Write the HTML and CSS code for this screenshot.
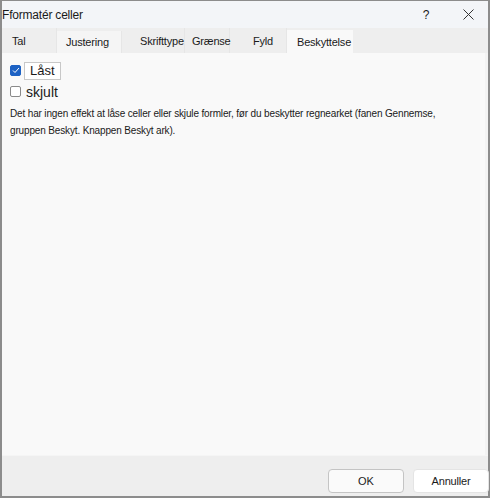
FILE: index.html
```html
<!DOCTYPE html>
<html lang="da">
<head>
<meta charset="UTF-8">
<title>Formatér celler</title>
<link rel="stylesheet" href="styles.css">
</head>
<body>
<div class="dialog">
<div class="title-bar">
<span class="title">Fformatér celler</span>
<span class="title-btn">?</span>
<span class="title-btn close">
<svg width="11" height="11" viewBox="0 0 11 11"><path d="M0.5 0.5L10.5 10.5M10.5 0.5L0.5 10.5" stroke="#333" stroke-width="1"/></svg>
</span>
</div>
<div class="tabs">
<div class="tab tab-tal">Tal</div>
<div class="tab tab-just">Justering</div>
<div class="tab tab-skrift">Skrifttype</div>
<div class="tab tab-graense">Grænse</div>
<div class="tab tab-fyld">Fyld</div>
<div class="tab tab-besk active">Beskyttelse</div>
</div>
<div class="panel">
<label class="check-row">
<span class="chk on"><svg width="8" height="7" viewBox="0 0 8 7"><path d="M1 3.5L3 5.5L7 1" stroke="#fff" stroke-width="1" fill="none"/></svg></span>
<span class="chk-label focus">Låst</span>
</label>
<label class="check-row">
<span class="chk"></span>
<span class="chk-label big">skjult</span>
</label>
<p class="note">Det har ingen effekt at låse celler eller skjule formler, før du beskytter regnearket (fanen Gennemse, gruppen Beskyt. Knappen Beskyt ark).</p>
</div>
<div class="footer">
<button type="button" class="btn btn-ok">OK</button>
<button type="button" class="btn btn-cancel">Annuller</button>
</div>
</div>
</body>
</html>
```
FILE: styles.css
```css
html, body { margin: 0; padding: 0; background: #fff; }
body { font-family: "Liberation Sans", Arial, sans-serif; color: #1a1a1a; }
.dialog { width: 490px; height: 498px; border-left: 2px solid #8c8c8c; border-right: 2px solid #8c8c8c; border-top: 1px solid #8c8c8c; border-bottom: 2px solid #8c8c8c; display: flex; flex-direction: column; box-sizing: border-box; }
.title-bar { height: 27px; background: #f3f5f8; display: flex; align-items: center; font-size: 12px; }
.title { flex: 1; letter-spacing: -0.2px; }
.title-btn { width: 44px; text-align: center; font-size: 12px; }
.close { display: flex; justify-content: center; align-items: center; width: 40px; }
.tabs { height: 25px; background: #eeeeee; display: flex; font-size: 11px; letter-spacing: -0.2px; }
.tab { height: 100%; display: flex; align-items: center; box-sizing: border-box; border-right: 1px solid #e6e6e6; }
.tab-tal { width: 55px; padding-left: 10px; }
.tab-just { width: 65px; padding-left: 9px; background: #f5f5f5; margin-top: 3px; height: 22px; }
.tab-skrift { width: 63px; padding-left: 18px; }
.tab-graense { width: 45px; padding-left: 7px; }
.tab-fyld { width: 57px; padding-left: 23px; }
.tab-besk { width: 66px; padding-left: 10px; }
.tab.active { background: #f9f9f9; margin-top: 2px; height: 23px; border-right: none; }
.panel { flex: 1; background: #f9f9f9; border-right: 3px solid #f3f3f3; padding: 7px 0 0 8px; }
.check-row { display: flex; align-items: center; height: 21px; }
.chk { width: 11px; height: 11px; border: 1px solid #8a8a8a; border-radius: 2px; background: #fff; box-sizing: border-box; display: flex; align-items: center; justify-content: center; }
.chk.on { background: #1d62c4; border-color: #1d62c4; }
.chk-label { margin-left: 4px; font-size: 13px; }
.chk-label.focus { border: 1px solid #c8c8c8; background: #fff; padding: 0 5px 1px 5px; margin-left: 3px; }
.chk-label.big { font-size: 14px; margin-left: 5px; }
.note { margin: 3px 0 0; font-size: 10px; line-height: 17px; letter-spacing: -0.15px; padding-right: 40px; }
.footer { height: 41px; background: #eeeeee; display: flex; justify-content: flex-end; align-items: flex-start; padding-top: 13px; box-sizing: border-box; border-top: 1px solid #f5f5f5; }
.btn { width: 76px; height: 24px; font-family: "Liberation Sans", Arial, sans-serif; font-size: 11px; color: #1a1a1a; background: #fafafa; border: 1px solid #d0d0d0; border-radius: 4px; padding: 0; }
.btn-ok { margin-right: 9px; border-color: #c4c4c4; }
.btn-cancel { background: #fff; border-color: #e4e4e4; margin-right: -1px; letter-spacing: -0.2px; }
```
